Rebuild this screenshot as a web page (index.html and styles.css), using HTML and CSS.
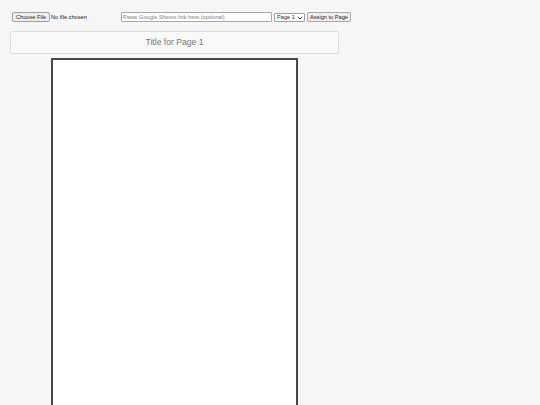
FILE: index.html
```html
<!DOCTYPE html>
<html lang="en">
<head>
<meta charset="utf-8">
<title>Page editor</title>
<link rel="stylesheet" href="styles.css">
</head>
<body>
<div class="app">
  <div class="toolbar">
    <input class="file" type="file">
    <input class="link" type="text" placeholder="Paste Google Sheets link here (optional)">
    <div class="page-wrap">
      <select class="page"><option>Page 1</option></select>
      <svg class="chevron" viewBox="0 0 6 4" width="6" height="4" aria-hidden="true"><path d="M.8.8 3 3 5.2.8" fill="none" stroke="#333" stroke-width="1"/></svg>
    </div>
    <button class="assign" type="button">Assign to Page</button>
  </div>
  <div class="title">Title for Page 1</div>
  <div class="sheet"></div>
</div>
</body>
</html>
```
FILE: styles.css
```css
* { box-sizing: border-box; }
html, body { margin: 0; height: 100%; overflow: hidden; }
body { background: #f6f6f6; font-family: "Liberation Sans", Arial, sans-serif; }
.app { width: 360px; padding: 11px 0 0 10px; }
.toolbar { display: flex; align-items: center; height: 12px; padding-left: 2px; }
.file, .link, .page, .assign, .file::file-selector-button { font: 5.66px "Liberation Sans", Arial, sans-serif; color: #222; }
.file { flex: none; width: 109px; }
.file::file-selector-button { width: 38px; height: 10px; padding: 0; margin-right: 1px; border: 1px solid #a0a0a0; border-radius: 2px; background: #efefef; }
.link { flex: none; width: 151px; height: 10px; margin-right: 2px; padding: 0 1px; border: 1px solid #a8a8a8; border-radius: 1px; background: #fff; }
.link::placeholder { color: #808080; }
.page-wrap { position: relative; flex: none; width: 31px; height: 9px; margin-right: 2px; }
.page { appearance: none; display: block; width: 100%; height: 100%; padding: 0 0 0 2px; border: 1px solid #a0a0a0; border-radius: 1px; background: #fff; }
.chevron { position: absolute; top: 3px; right: 2px; }
.assign { flex: none; width: 44px; height: 10px; padding: 0; border: 1px solid #a8a8a8; border-radius: 2px; background: #efefef; }
.title { width: 329px; height: 23px; margin-top: 8px; border: 1px solid #ddd; border-radius: 2px; background: #f9f9f9; color: #777; font-size: 8.6px; line-height: 21px; text-align: center; }
.sheet { width: 247px; height: 480px; margin: 4px 0 0 41px; background: #fff; border: 2px solid #484848; }
```
